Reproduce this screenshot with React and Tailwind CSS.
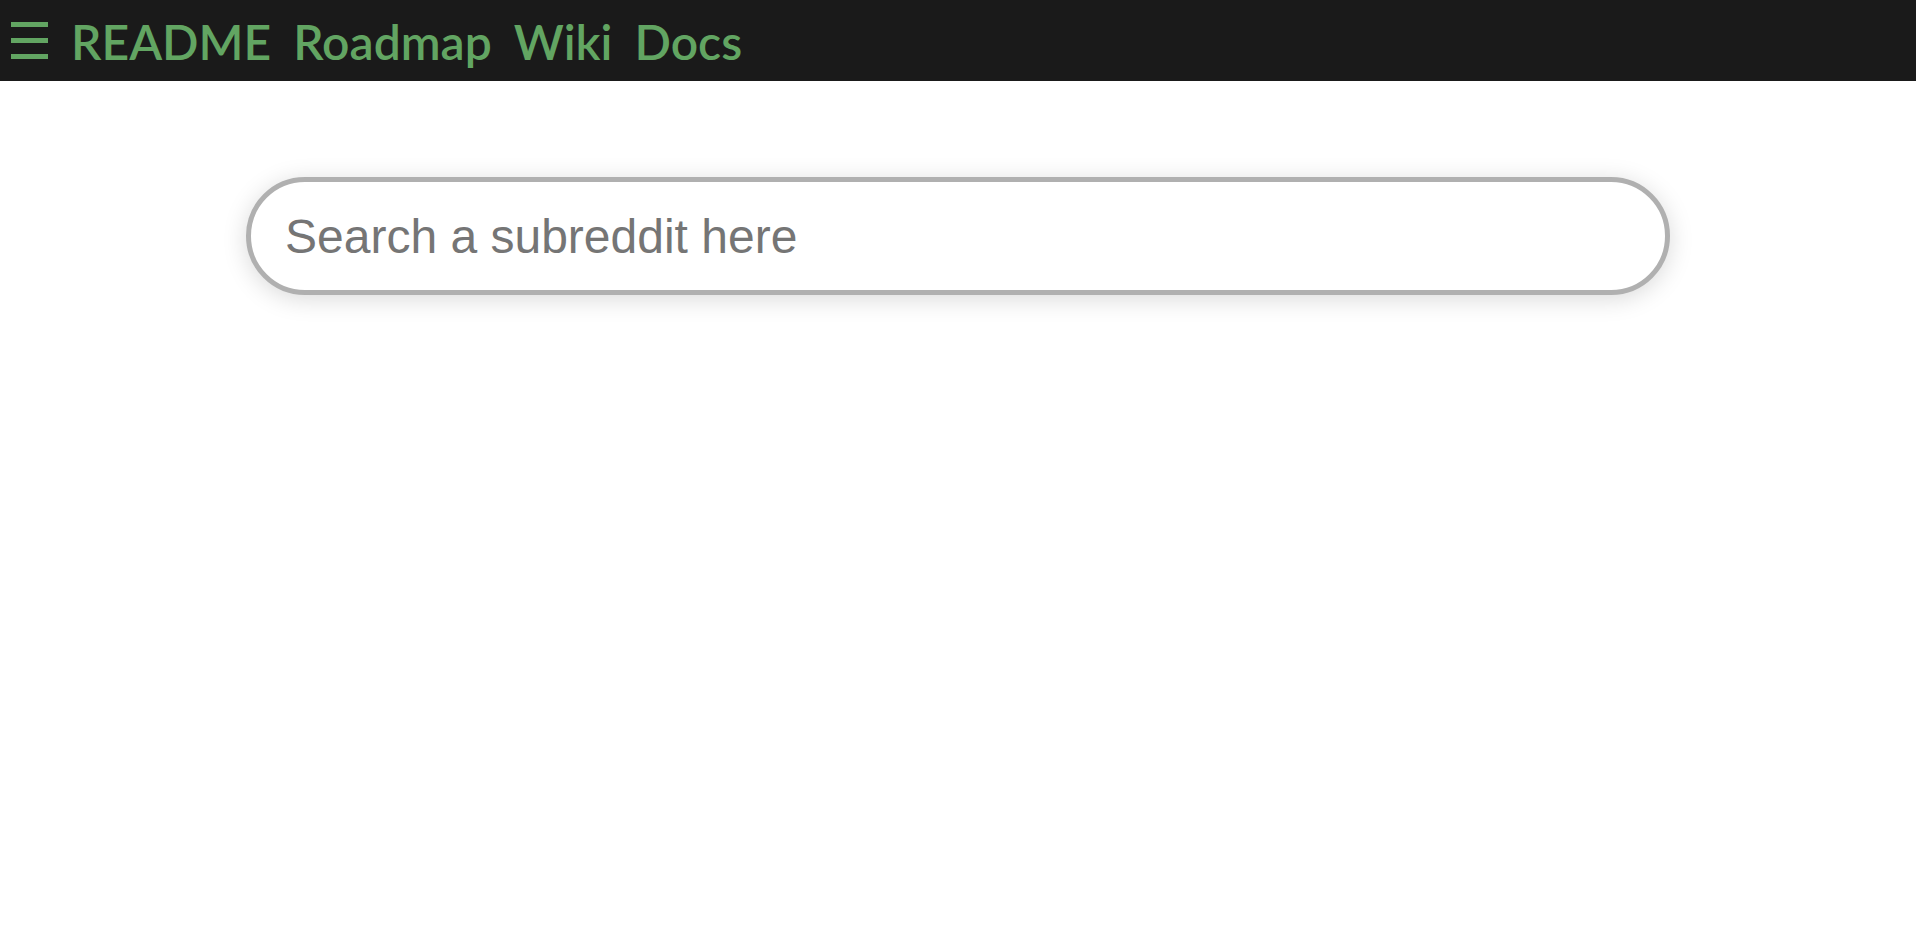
export default function App() {
  const links = ["README", "Roadmap", "Wiki", "Docs"];

  return (
    <div className="min-h-screen bg-white">
      {/* Top bar */}
      <nav className="flex h-[81px] items-center bg-[#1a1a1a] pl-[11px] font-['Lato','Noto_Sans',sans-serif] text-[#62a562]">
        <button className="mr-[23px] flex h-[37px] w-[37px] flex-col justify-between">
          <span className="block h-[5px] w-full bg-[#62a562]" />
          <span className="block h-[5px] w-full bg-[#62a562]" />
          <span className="block h-[5px] w-full bg-[#62a562]" />
        </button>
        <div className="flex items-center gap-[22px] pt-[2px] text-[48px] font-semibold leading-none">
          {links.map((l) => (
            <a key={l} href="#" className="hover:text-[#7cc47c]">
              {l}
            </a>
          ))}
        </div>
      </nav>

      {/* Search */}
      <div className="flex justify-center pt-[96px]">
        <input
          type="text"
          placeholder="Search a subreddit here"
          className="h-[118px] w-[1424px] rounded-full border-[5px] border-[#b0b0b0] bg-white pl-[34px] font-['Liberation_Sans',Arial,sans-serif] text-[48px] text-[#333] shadow-[0_4px_24px_rgba(0,0,0,0.15)] outline-none placeholder:text-[#757575]"
        />
      </div>
    </div>
  );
}
